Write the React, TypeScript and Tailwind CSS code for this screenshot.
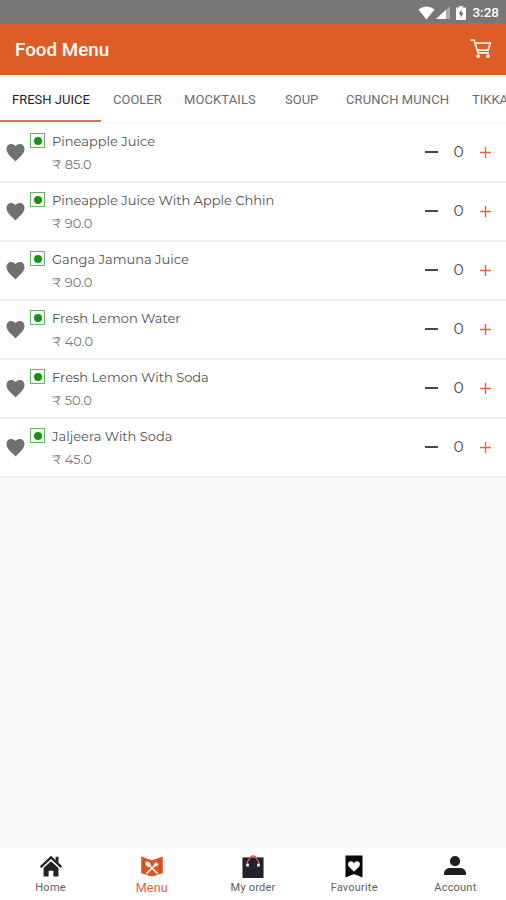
import React from "react";

const tabs = [
  { label: "FRESH JUICE", box: "w-[101px] pl-3", text: "text-[#222]" },
  { label: "COOLER", box: "w-[72px] pl-3", text: "" },
  { label: "MOCKTAILS", box: "w-[100px] pl-[11px]", text: "tracking-[0.1px]" },
  { label: "SOUP", box: "w-[61px] pl-[12px]", text: "" },
  { label: "CRUNCH MUNCH", box: "w-[126px] pl-[12px]", text: "tracking-[0.1px]" },
  { label: "TIKKA", box: "w-[80px] pl-[12px]", text: "" },
];

const items = [
  { name: "Pineapple Juice", price: "85.0" },
  { name: "Pineapple Juice With Apple Chhin", price: "90.0" },
  { name: "Ganga Jamuna Juice", price: "90.0" },
  { name: "Fresh Lemon Water", price: "40.0" },
  { name: "Fresh Lemon With Soda", price: "50.0" },
  { name: "Jaljeera With Soda", price: "45.0" },
];

function StatusBar() {
  return (
    <div className="flex h-[23px] shrink-0 items-center justify-end bg-[#777777] pr-[7px] pt-[2px] text-white">
      <svg className="h-[14px] w-[17px]" viewBox="0 0 17 14" fill="currentColor">
        <path d="M.4 3.5Q8.5-2.5 16.6 3.5L8.5 13.6Z" />
      </svg>
      <svg className="ml-[1px] h-[13px] w-[14px]" viewBox="0 0 14 13">
        <path d="M0 13L14 0V13Z" fill="#aaa" />
        <path d="M0 13L10 3.7V13Z" fill="white" />
      </svg>
      <svg className="ml-[6px] h-[14px] w-[10px]" viewBox="0 0 10 14">
        <path d="M3 0h4v1.5h3V14H0V1.5h3Z" fill="white" />
        <path d="M5.6 3.5L2.7 8.2h1.9v3.6l2.8-5H5.6Z" fill="#666" />
      </svg>
      <span className="ml-[6px] text-[13.5px] font-medium leading-none">3:28</span>
    </div>
  );
}

function Header() {
  return (
    <header className="flex h-[52px] shrink-0 items-center justify-between bg-[#de5d26] pl-[15px] pr-[14px] text-white">
      <h1 className="mt-[2px] text-[18.8px] font-medium leading-none">Food Menu</h1>
      <svg className="h-[20px] w-[22px]" viewBox="0 0 22 20" fill="none" stroke="#fff0e8" strokeWidth="1.8">
        <path d="M.5 1.2h3.6l4 12.6h11M5.2 4.2h15.1l-2.2 7H7.4" />
        <circle cx="8.2" cy="17.2" r="1.9" fill="#fff0e8" stroke="none" />
        <circle cx="18" cy="17.2" r="1.9" fill="#fff0e8" stroke="none" />
      </svg>
    </header>
  );
}

function Tabs() {
  return (
    <nav className="flex h-[47px] shrink-0 overflow-hidden bg-white text-[13px] text-[#6c6c6c]">
      {tabs.map((t, i) => (
        <div
          key={t.label}
          className={`flex shrink-0 items-center whitespace-nowrap border-b-2 pt-[5px] ${t.box} ${i === 0 ? "border-[#dc7160]" : "border-transparent"}`}
        >
          <span className={t.text}>{t.label}</span>
        </div>
      ))}
    </nav>
  );
}

function ItemRow({ name, price }: { name: string; price: string }) {
  return (
    <li className="flex h-[59px] border-b-2 border-[#eeeeee] bg-white font-['Montserrat','Inter',sans-serif]">
      <svg className="ml-[6px] mt-[19px] h-[19px] w-[19px]" viewBox="0 0 19 19" fill="#707070">
        <path d="M9.5 18.5L7.6 16.5C3 12.1.5 9.7.5 5.8.5 3 2.6.9 5.2.9c1.7 0 3.3.8 4.3 2.2C10.5 1.7 12.1.9 13.8.9c2.6 0 4.7 2.1 4.7 4.9 0 3.9-2.5 6.3-7.1 10.7Z" />
      </svg>
      <div className="ml-[5px] mt-[9px] flex size-[15px] items-center justify-center border border-[#68b168]">
        <div className="size-[8px] rounded-full bg-[#15920f]" />
      </div>
      <div className="ml-[7px] flex-1 whitespace-nowrap pt-[9px]">
        <div className="text-[13px] leading-[17px] text-[#505050]">{name}</div>
        <div className="mt-[6px] text-[13px] leading-[17px] text-[#777]">₹ {price}</div>
      </div>
      <div className="mt-[18px] flex h-[20px] items-center pr-[14px]">
        <div className="h-[2px] w-[13px] bg-[#484848]" />
        <span className="ml-[15px] w-[11px] text-center text-[14px] leading-none text-[#484848]">
          <span className="inline-block scale-x-[1.1]">0</span>
        </span>
        <svg className="ml-[15px] size-[13px]" viewBox="0 0 13 13" stroke="#e46341" strokeWidth="1.4">
          <path d="M1 6.5h11M6.5 1v11" />
        </svg>
      </div>
    </li>
  );
}

function HomeIcon() {
  return (
    <svg className="h-[22px] w-[24px]" viewBox="0 0 24 23" fill="none">
      <path d="M1.2 12.6L12 2.5 22.8 12.6" stroke="#222" strokeWidth="2.4" />
      <path d="M16.8 1.8h3v7l-3-3Z" fill="#222" />
      <path d="M4.2 13.6L12 6.6l7.8 7v8.9h-5.3v-6h-5v6H4.2Z" fill="#222" />
    </svg>
  );
}

function MenuIcon() {
  return (
    <svg className="h-[21px] w-[24px]" viewBox="0 0 24 22">
      <path d="M.7.5L12 4.5 23.3.5V18L12 21.5.7 18Z" fill="#db5724" />
      <path d="M3.5 3.4v13M20.5 3.4v13" stroke="#c54517" />
      <path d="M8 9l10 9.5M16 9L6 18.5" stroke="white" strokeWidth="1.5" />
      <ellipse cx="7.8" cy="8.7" rx="2.2" ry="3.2" transform="rotate(-43 7.8 8.7)" fill="white" />
      <path d="M13.8 9.2l2.4-3 .4 1.5 1-1 .1 1.6 1.5-.2-2.8 3.2Z" fill="white" />
    </svg>
  );
}

function OrderIcon() {
  return (
    <svg className="h-[23px] w-[22px]" viewBox="0 0 22 24">
      <path d="M0 2.5h22V24H0Z" fill="#20222e" />
      <path d="M5 10V7.5L8.5 2Q11 .2 13.5 2L17 7.5V10" fill="none" stroke="#dc5c4a" strokeWidth="1.4" />
      <path d="M3.8 9h3v3h-3ZM15.2 9h3v3h-3Z" fill="#e7e7eb" />
    </svg>
  );
}

function FavouriteIcon() {
  return (
    <svg className="h-[23px] w-[18px]" viewBox="0 0 18 23">
      <path d="M.5.5h17v22L9 19 .5 22.5Z" fill="#080808" />
      <path d="M9 16.8L4.2 12C2 9.6 3.2 6.3 5.9 6.3c1.4 0 2.5.8 3.1 2 .6-1.2 1.7-2 3.1-2 2.7 0 3.9 3.3 1.7 5.7Z" fill="white" />
    </svg>
  );
}

function AccountIcon() {
  return (
    <svg className="h-[20px] w-[22px]" viewBox="0 0 22 20" fill="#202020">
      <circle cx="11" cy="5.2" r="5.1" />
      <path d="M0 19v-1.5C0 14 3 12 6.5 12h9c3.5 0 6.5 2 6.5 5.5V19Z" />
    </svg>
  );
}

const nav = [
  { label: "Home", icon: <HomeIcon />, text: "text-[11px] tracking-[0.3px]" },
  { label: "Menu", icon: <MenuIcon />, text: "text-[12.5px] tracking-[0.2px] text-[#df6141]" },
  { label: "My order", icon: <OrderIcon />, text: "text-[11px] tracking-[0.2px]" },
  { label: "Favourite", icon: <FavouriteIcon />, text: "text-[11px] tracking-[0.2px]" },
  { label: "Account", icon: <AccountIcon />, text: "text-[11px] tracking-[0.2px]" },
];

export default function App() {
  return (
    <div className="flex h-[900px] w-[506px] flex-col overflow-hidden bg-[#fafafa] font-['Roboto',sans-serif]">
      <StatusBar />
      <Header />
      <Tabs />
      <ul className="flex-1 pt-[2px]">
        {items.map((item) => (
          <ItemRow key={item.name} {...item} />
        ))}
      </ul>
      <nav className="grid h-[52px] shrink-0 grid-cols-5 bg-white text-[#606060]">
        {nav.map((n) => (
          <div key={n.label} className="flex flex-col items-center">
            <div className="flex h-[32px] items-center pt-[4px]">{n.icon}</div>
            <span className={`mt-[1px] leading-[14px] ${n.text}`}>{n.label}</span>
          </div>
        ))}
      </nav>
    </div>
  );
}
